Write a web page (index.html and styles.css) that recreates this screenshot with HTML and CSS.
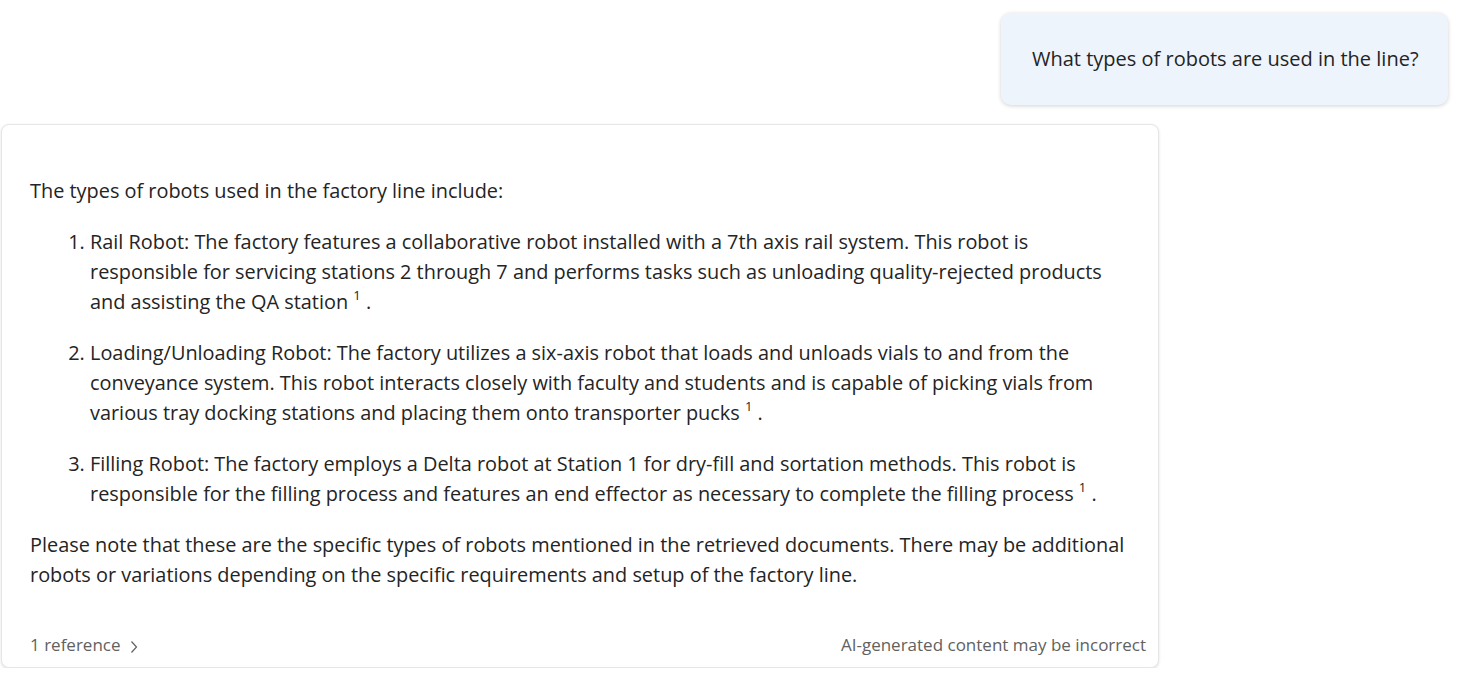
FILE: index.html
```html
<!DOCTYPE html>
<html>
<head>
<meta charset="utf-8">
<link rel="stylesheet" href="styles.css">
</head>
<body>
<div class="chat">
  <div class="user-row">
    <div class="user-bubble">What types of robots are used in the line?</div>
  </div>
  <div class="answer">
    <div class="answer-body">
      <p class="intro">The types of robots used in the factory line include:</p>
      <ol class="items">
        <li>Rail Robot: The factory features a collaborative robot installed with a 7th axis rail system. This robot is responsible for servicing stations 2 through 7 and performs tasks such as unloading quality-rejected products and assisting the QA station <sup>1</sup> .</li>
        <li>Loading/Unloading Robot: The factory utilizes a six-axis robot that loads and unloads vials to and from the conveyance system. This robot interacts closely with faculty and students and is capable of picking vials from various tray docking stations and placing them onto transporter pucks <sup>1</sup> .</li>
        <li>Filling Robot: The factory employs a Delta robot at Station 1 for dry-fill and sortation methods. This robot is responsible for the filling process and features an end effector as necessary to complete the filling process <sup>1</sup> .</li>
      </ol>
      <p class="outro">Please note that these are the specific types of robots mentioned in the retrieved documents. There may be additional robots or variations depending on the specific requirements and setup of the factory line.</p>
    </div>
    <div class="answer-foot">
      <span class="refs">1 reference
        <svg class="chev" width="10" height="16" viewBox="0 0 10 16"><path d="M2.5 2.5 L7.5 8 L2.5 13.5" fill="none" stroke="#616161" stroke-width="1.2"/></svg>
      </span>
      <span class="disclaimer">AI-generated content may be incorrect</span>
    </div>
  </div>
</div>
</body>
</html>
```
FILE: styles.css
```css
html, body {
  margin: 0;
  padding: 0;
  background: #ffffff;
}
body {
  font-family: "Open Sans", "Noto Sans", sans-serif;
  color: #242424;
}
.chat {
  display: flex;
  flex-direction: column;
  padding: 13px 26px 0 1px;
}
.user-row {
  display: flex;
  justify-content: flex-end;
}
.user-bubble {
  width: 447px;
  height: 92px;
  box-sizing: border-box;
  display: flex;
  align-items: center;
  padding-left: 31px;
  background: #eef4fc;
  border-radius: 10px;
  box-shadow: 0 1px 4px rgba(0,0,0,0.18);
  font-size: 20px;
  line-height: 30px;
}
.answer {
  margin-top: 19px;
  width: 1158px;
  box-sizing: border-box;
  background: #fff;
  border: 1px solid #e6e6e6;
  border-radius: 8px;
  box-shadow: 0 1px 3px rgba(0,0,0,0.12);
  padding: 0 12px 0 28px;
}
.answer-body {
  padding-top: 51px;
  padding-right: 14px;
  font-size: 19.9px;
  line-height: 30px;
}
.answer-body p {
  margin: 0;
}
.items {
  margin: 21px 0 21px 0;
  padding-left: 60px;
}
.items li {
  margin-bottom: 21px;
}
.items li:last-child {
  margin-bottom: 0;
}
sup {
  font-size: 13px;
  line-height: 0;
  vertical-align: 9px;
}
.answer-foot {
  display: flex;
  justify-content: space-between;
  align-items: center;
  margin-top: 43px;
  padding-bottom: 10px;
  font-size: 17px;
  line-height: 24px;
  color: #616161;
}
.refs {
  display: flex;
  align-items: center;
  gap: 8px;
}
.chev {
  margin-top: 3px;
}
```
